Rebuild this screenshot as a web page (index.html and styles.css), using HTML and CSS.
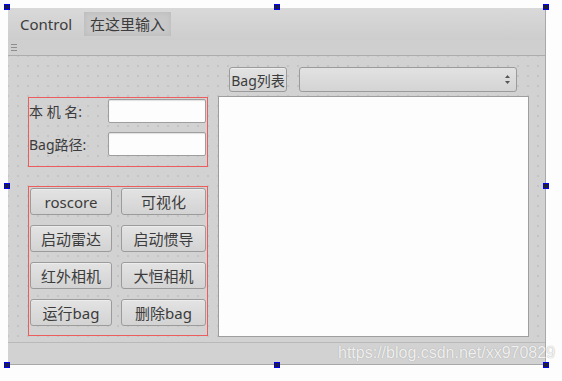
FILE: index.html
```html
<!DOCTYPE html>
<html lang="zh-CN">
<head>
  <meta charset="UTF-8">
  <title>Control</title>
  <link rel="stylesheet" href="styles.css">
</head>
<body>

  <div class="window">
    <div class="menubar">
      <span class="menu">Control</span>
      <span class="menu placeholder">在这里输入</span>
    </div>
    <div class="toolbar"><span class="grip"></span></div>

    <div class="central">
      <div class="left-col">
        <div class="frame info">
          <label class="label">本 机 名:</label>
          <input class="field" type="text">
          <label class="label">Bag路径:</label>
          <input class="field" type="text">
        </div>
        <div class="frame actions">
          <button class="btn">roscore</button>
          <button class="btn">可视化</button>
          <button class="btn">启动雷达</button>
          <button class="btn">启动惯导</button>
          <button class="btn">红外相机</button>
          <button class="btn">大恒相机</button>
          <button class="btn">运行bag</button>
          <button class="btn">删除bag</button>
        </div>
      </div>

      <div class="right-col">
        <div class="bag-row">
          <button class="btn bag-btn">Bag列表</button>
          <div class="combo">
            <svg class="spin" width="7" height="13" viewBox="0 0 7 13">
              <path d="M1 5 L3.5 2 L6 5 Z" fill="#555"/>
              <path d="M1 8 L3.5 11 L6 8 Z" fill="#555"/>
            </svg>
          </div>
        </div>
        <div class="list"></div>
      </div>
    </div>

    <div class="statusbar"></div>

    <span class="handle h-tl"></span>
    <span class="handle h-tm"></span>
    <span class="handle h-tr"></span>
    <span class="handle h-ml"></span>
    <span class="handle h-mr"></span>
    <span class="handle h-bl"></span>
    <span class="handle h-bm"></span>
    <span class="handle h-br"></span>
  </div>

  <div class="watermark">https://blog.csdn.net/xx970829</div>

</body>
</html>
```

FILE: styles.css
```css
body {
  margin: 0;
  width: 562px;
  height: 381px;
  overflow: hidden;
  position: relative;
  background: #fdfdfd;
  font-family: "Noto Sans", "Noto Sans CJK SC", sans-serif;
  font-size: 14px;
  color: #3c3c3c;
}

.window {
  position: relative;
  margin: 8px 0 0 8px;
  width: 538px;
  background: #d2d2d2;
  border-right: 1px solid #a9a9a9;
  border-bottom: 1px solid #a9a9a9;
  box-sizing: border-box;
}

.menubar {
  height: 32px;
  display: flex;
  align-items: center;
  padding-left: 6px;
  background: linear-gradient(#d9d9d9, #cdcdcd);
}

.menu {
  padding: 0 6px;
  line-height: 24px;
  font-size: 15px;
}

.placeholder {
  margin-left: 6px;
  padding: 0 6px;
  background: #c9c9c9;
  box-shadow: inset 0 0 6px #b9b9b9;
}

.toolbar {
  height: 15px;
  background: #cfcfcf;
  border-bottom: 1px solid #acacac;
  display: flex;
  align-items: flex-end;
  padding-left: 3px;
}

.grip {
  width: 6px;
  height: 9px;
  margin-bottom: 2px;
  background: repeating-linear-gradient(#8e8e8e 0 1px, transparent 1px 3px);
}

.central {
  height: 286px;
  display: flex;
  padding-left: 20px;
  background-color: #d2d2d2;
  background-image: radial-gradient(circle, #b2b2b2 0.6px, transparent 0.8px);
  background-size: 10px 10px;
  background-position: -5px -5px;
}

.left-col {
  width: 180px;
  margin-top: 41px;
  display: flex;
  flex-direction: column;
  gap: 19px;
}

.frame {
  border: 1px solid #ec5d5d;
  box-sizing: border-box;
}

.info {
  height: 70px;
  display: grid;
  grid-template-columns: 79px 98px;
  grid-auto-rows: 24px;
  row-gap: 9px;
  padding-top: 1px;
  align-items: center;
}

.label {
  font-size: 14px;
  white-space: pre;
}

.field {
  height: 24px;
  margin: 0;
  box-sizing: border-box;
  border: 1px solid #9e9e9e;
  border-radius: 2px;
  background: #fdfdfd;
  box-shadow: inset 0 1px 1px #e0e0e0;
}

.actions {
  height: 150px;
  display: grid;
  grid-template-columns: 82px 85px;
  grid-auto-rows: 27px;
  column-gap: 9px;
  row-gap: 10px;
  padding: 1px 0 0 1px;
}

.btn {
  margin: 0;
  padding: 0;
  font-family: inherit;
  font-size: 15px;
  color: #3c3c3c;
  border: 1px solid #9b9b9b;
  border-radius: 3px;
  background: linear-gradient(#e3e3e3, #d3d3d3);
  box-shadow: inset 0 1px 0 #ededed;
}

.right-col {
  width: 311px;
  margin-left: 10px;
  display: flex;
  flex-direction: column;
}

.bag-row {
  margin-top: 11px;
  height: 25px;
  display: flex;
  padding-left: 11px;
  gap: 12px;
}

.bag-btn {
  width: 58px;
  font-size: 14px;
}

.combo {
  width: 218px;
  box-sizing: border-box;
  border: 1px solid #9b9b9b;
  border-radius: 3px;
  background: linear-gradient(#e2e2e2, #d4d4d4);
  display: flex;
  align-items: center;
  justify-content: flex-end;
  padding-right: 5px;
}

.list {
  margin-top: 4px;
  height: 241px;
  box-sizing: border-box;
  border: 1px solid #9e9e9e;
  background: #fdfdfd;
}

.statusbar {
  height: 21px;
  border-top: 1px solid #b9b9b9;
  background: #d2d2d2;
}

.handle {
  position: absolute;
  width: 6px;
  height: 6px;
  border: 1px solid #0000f0;
  background: #202030;
  box-sizing: border-box;
}

.h-tl { left: -4px; top: -4px; }
.h-tm { left: 266px; top: -4px; }
.h-tr { right: -4px; top: -4px; }
.h-ml { left: -4px; top: 175px; }
.h-mr { right: -4px; top: 175px; }
.h-bl { left: -4px; bottom: -4px; }
.h-bm { left: 266px; bottom: -4px; }
.h-br { right: -4px; bottom: -4px; }

.watermark {
  position: absolute;
  left: 338px;
  top: 344px;
  font-family: "Liberation Sans", Arial, sans-serif;
  font-size: 16px;
  color: rgba(255, 255, 255, 0.85);
  text-shadow: 0 0 1px #9a9a9a;
}
```
